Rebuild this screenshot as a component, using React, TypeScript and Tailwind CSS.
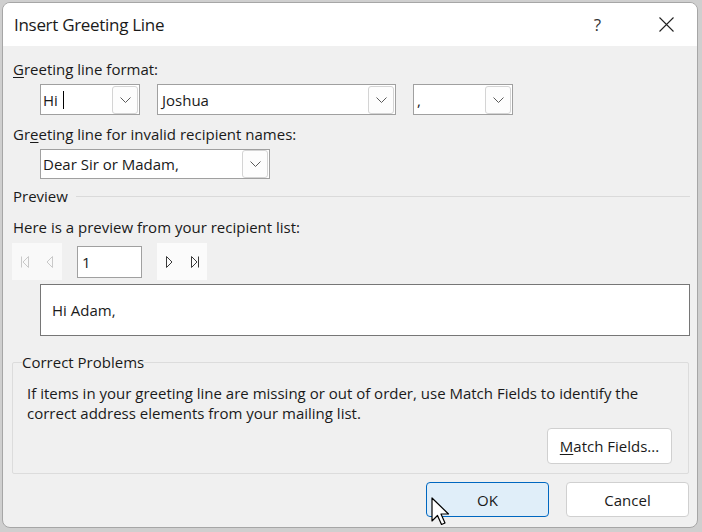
import React from "react";

function Chevron() {
  return (
    <svg width="11" height="6" viewBox="0 0 11 6" fill="none">
      <path d="M0.5 0.5 L5.5 5.5 L10.5 0.5" stroke="#5a5a5a" strokeWidth="1" />
    </svg>
  );
}

function Combo({ width, height, children }: { width: string; height: string; children?: React.ReactNode }) {
  return (
    <div className={`flex items-center border border-[#a0a0a0] bg-white ${width} ${height}`}>
      <div className="flex flex-1 items-center pl-[2px] text-[#1a1a1a]">{children}</div>
      <div className="mr-px flex h-[28px] w-[26px] items-center justify-center rounded-[3px] border border-[#d4d4d4] bg-[#fdfdfd]">
        <Chevron />
      </div>
    </div>
  );
}

function NavIcon({ kind, on }: { kind: "first" | "prev" | "next" | "last"; on: boolean }) {
  const c = on ? "#3a3a3a" : "#c9c9c9";
  const paths: Record<string, React.ReactNode> = {
    first: (
      <>
        <path d="M1.5 0.5 V11.5" stroke={c} />
        <path d="M8.5 0.5 L3 6 L8.5 11.5 Z" stroke={c} fill="none" />
      </>
    ),
    prev: <path d="M7.5 0.5 L2 6 L7.5 11.5 Z" stroke={c} fill="none" />,
    next: <path d="M1.5 0.5 L7 6 L1.5 11.5 Z" stroke={c} fill="none" />,
    last: (
      <>
        <path d="M1.5 0.5 L7 6 L1.5 11.5 Z" stroke={c} fill="none" />
        <path d="M8.5 0.5 V11.5" stroke={c} />
      </>
    ),
  };
  return (
    <svg width="10" height="12" viewBox="0 0 10 12">
      {paths[kind]}
    </svg>
  );
}

export default function App() {
  return (
    <div className="relative h-[532px] w-[702px] overflow-hidden bg-[#cfcfcf] pl-[2px] pt-[2px] text-[15px] leading-[20px] text-[#1a1a1a] [font-family:'Open_Sans','Noto_Sans',sans-serif]">
      <div className="flex h-[526px] w-[696px] flex-col overflow-hidden rounded-[8px] border border-[#a6a6a6] bg-[#f0f0f0]">
        {/* title bar */}
        <div className="flex h-[43px] shrink-0 items-center bg-white pl-[11px]">
          <span className="flex-1 text-[17px] tracking-[-0.3px]">Insert Greeting Line</span>
          <span className="mr-[58px] text-[17px] text-[#333]">?</span>
          <svg width="15" height="15" viewBox="0 0 15 15" className="mr-[23px]">
            <path d="M0.5 0.5 L14.5 14.5 M14.5 0.5 L0.5 14.5" stroke="#222" strokeWidth="1.1" />
          </svg>
        </div>

        <div className="flex flex-col pl-[10px] pt-[13px]">
          <div>
            <span className="underline underline-offset-2">G</span>reeting line format:
          </div>
          <div className="ml-[27px] mt-[5px] flex gap-[17px]">
            <Combo width="w-[100px]" height="h-[31px]">
              <span>Hi</span>
              <span className="ml-[5px] h-[18px] w-px bg-black" />
            </Combo>
            <Combo width="w-[239px]" height="h-[31px]">
              <span className="pl-[2px]">Joshua</span>
            </Combo>
            <Combo width="w-[100px]" height="h-[31px]">
              <span className="pl-[1px]">,</span>
            </Combo>
          </div>

          <div className="mt-[9px]">
            Gr<span className="underline underline-offset-2">e</span>eting line for invalid recipient names:
          </div>
          <div className="ml-[27px] mt-[5px] flex">
            <Combo width="w-[230px]" height="h-[30px]">
              <span>Dear Sir or Madam,</span>
            </Combo>
          </div>

          <div className="mt-[7px] flex items-center pr-[7px]">
            <span>Preview</span>
            <div className="ml-[8px] h-px flex-1 bg-[#dadada]" />
          </div>

          <div className="mt-[11px]">Here is a preview from your recipient list:</div>

          <div className="-ml-px mt-[6px] flex items-center">
            <div className="flex h-[37px] w-[50px] items-center justify-center gap-[15px] bg-[#f9f9f9]">
              <NavIcon kind="first" on={false} />
              <NavIcon kind="prev" on={false} />
            </div>
            <div className="ml-[15px] flex h-[32px] w-[65px] items-center border border-[#a0a0a0] bg-white pl-[4px]">
              1
            </div>
            <div className="ml-[15px] flex h-[37px] w-[50px] items-center justify-center gap-[15px] bg-[#fbfbfb]">
              <NavIcon kind="next" on={true} />
              <NavIcon kind="last" on={true} />
            </div>
          </div>

          <div className="ml-[27px] mt-[4px] flex h-[52px] w-[650px] items-center border border-[#767676] bg-white pl-[11px]">
            Hi Adam,
          </div>

          <fieldset className="-ml-px mt-[16px] w-[677px] rounded-[2px] border border-[#dcdcdc] px-[9px] pb-[9px]">
            <legend className="leading-[20px]">Correct Problems</legend>
            <p className="ml-[5px] mt-[11px] leading-[20px]">
              If items in your greeting line are missing or out of order, use Match Fields to identify the
              <br />
              correct address elements from your mailing list.
            </p>
            <div className="mt-[5px] flex justify-end pr-[7px]">
              <button className="h-[36px] w-[125px] rounded-[4px] border border-[#d0d0d0] bg-white">
                <span className="underline underline-offset-2">M</span>atch Fields...
              </button>
            </div>
          </fieldset>

          <div className="mt-[8px] flex justify-end gap-[17px] pr-[8px]">
            <button className="h-[35px] w-[123px] rounded-[4px] border border-[#0067c0] bg-[#e0eef9]">OK</button>
            <button className="h-[35px] w-[123px] rounded-[4px] border border-[#d0d0d0] bg-white">Cancel</button>
          </div>
        </div>
      </div>

      {/* mouse pointer */}
      <svg className="absolute left-[431px] top-[497px]" width="20" height="29" viewBox="0 0 20 29">
        <path
          d="M1 1 L1 24 L6.5 18.5 L10.5 27.5 L14 26 L10 17 L17.5 17 Z"
          fill="white"
          stroke="black"
          strokeWidth="1.2"
          strokeLinejoin="round"
        />
      </svg>
    </div>
  );
}
